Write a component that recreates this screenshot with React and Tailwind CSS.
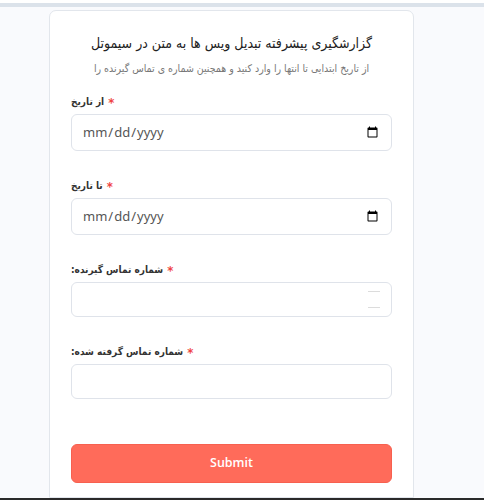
import {useState} from "react";

const persian = {fontFamily: '"DejaVu Sans Condensed", "DejaVu Sans", sans-serif'};

const Field = ({label, type, h, children}) => (
    <div className="mb-[28px]">
        <label className="flex items-center gap-[4px] h-[14px] text-[10px] leading-[14px] font-bold text-[#333] mb-[5px]" style={persian}>
            <span>{label}</span>
            <span className="text-[13px] leading-none text-[#ef4444]">*</span>
        </label>
        <div className="relative">
            <input type={type}
                className={`w-full ${h === 34 ? "h-[35px]" : "h-[37px]"} px-[10px] border border-[#dfe3ea] rounded-[6px] bg-white text-[13px] text-[#555] outline-none`}
                style={{fontFamily: '"Noto Sans", sans-serif'}}/>
            {children}
        </div>
    </div>
);

const App = () => {
    const [sent, setSent] = useState(false);

    return (
        <div className="h-[500px] flex flex-col bg-[#f9fafd] overflow-hidden">
            <div className="h-[3px] bg-white"/>
            <div className="h-[4px] bg-[#dbe2ea]"/>
            <div className="flex-1 flex justify-start pl-[49px] pt-[3px] overflow-hidden">
                <div className="w-[365px] bg-white border border-[#e2e6ec] rounded-t-[7px] px-[21px] pt-[20px]">
                    <h2 className="text-center text-[14px] leading-[24px] text-[#222] mb-[5px] whitespace-nowrap" style={persian}>
                        گزارشگیری پیشرفته تبدیل ویس ها به متن در سیموتل
                    </h2>
                    <p className="text-center text-[10.5px] leading-[16px] text-[#777] mb-[19px] whitespace-nowrap" style={persian}>
                        از تاریخ ابتدایی تا انتها را وارد کنید و همچنین شماره ی تماس گیرنده را
                    </p>
                    <form onSubmit={(e) => {
                        e.preventDefault();
                        setSent(true);
                    }}>
                        <Field label="از تاریخ" type="date"/>
                        <Field label="تا تاریخ" type="date"/>
                        <Field label=":شماره تماس گیرنده" type="text" h={34}>
                            <span className="absolute right-[12px] top-[9px] w-[12px] h-px bg-[#dcdcdc]"/>
                            <span className="absolute right-[12px] top-[25px] w-[12px] h-px bg-[#dcdcdc]"/>
                        </Field>
                        <Field label=":شماره تماس گرفته شده" type="text" h={34}/>
                        <button type="submit"
                            className="w-full mt-[17px] h-[39px] rounded-[6px] bg-[#ff6b5a] border border-[#f7604f] text-white text-[12.5px] font-semibold"
                            style={{fontFamily: '"Open Sans", sans-serif'}}>
                            {sent ? "Submit" : "Submit"}
                        </button>
                    </form>
                </div>
            </div>
            <div className="h-[2px] bg-[#2a2a2a]"/>
        </div>
    );
};

export default App;
